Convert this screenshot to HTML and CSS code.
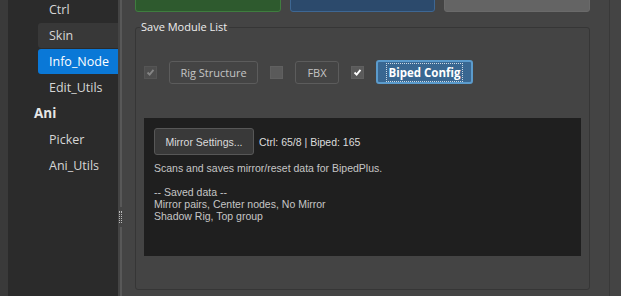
FILE: index.html
```html
<!DOCTYPE html>
<html lang="en">
<head>
  <meta charset="UTF-8" />
  <title>Rig Tools - Info_Node</title>
  <link rel="stylesheet" href="styles.css">
</head>
<body>
  <div class="app">
    <div class="edge"></div>

    <!-- Sidebar -->
    <nav class="sidebar">
      <div class="item">Ctrl</div>
      <div class="item hover">Skin</div>
      <div class="item active">Info_Node</div>
      <div class="item">Edit_Utils</div>
      <div class="section">Ani</div>
      <div class="item">Picker</div>
      <div class="item">Ani_Utils</div>
    </nav>

    <!-- Splitter -->
    <div class="splitter">
      <div class="split-line top"></div>
      <div class="grip"></div>
      <div class="split-line bottom"></div>
    </div>

    <!-- Page -->
    <main class="content">
      <div class="top-buttons">
        <button class="big green"></button>
        <button class="big blue"></button>
        <button class="big grey"></button>
      </div>

      <fieldset class="group">
        <legend>Save Module List</legend>

        <div class="module-row">
          <span class="check disabled"><svg viewBox="0 0 13 13"><polyline points="3,6.5 5.5,9 10,3.5"/></svg></span>
          <button class="module-btn rig">Rig Structure</button>
          <span class="check"></span>
          <button class="module-btn fbx">FBX</button>
          <span class="check on"><svg viewBox="0 0 13 13"><polyline points="3,6.5 5.5,9 10,3.5"/></svg></span>
          <button class="module-btn selected"><span class="focus">Biped Config</span></button>
        </div>

        <div class="console">
          <div class="console-top">
            <button class="mirror-btn">Mirror Settings...</button>
            <span class="stats">Ctrl: 65/8 | Biped: 165</span>
          </div>
          <p class="log">Scans and saves mirror/reset data for BipedPlus.<br><br>-- Saved data --<br>Mirror pairs, Center nodes, No Mirror<br>Shadow Rig, Top group</p>
        </div>
      </fieldset>
    </main>

    <div class="gutter"></div>
  </div>
</body>
</html>
```

FILE: styles.css
```css
*{margin:0;padding:0;box-sizing:border-box;}
html,body{width:100%;height:100%;background:#444;overflow:hidden;
  font-family:"Open Sans","Liberation Sans",sans-serif;color:#ddd;}

.app{display:flex;height:296px;}

.edge{width:8px;background:#3a3a3a;flex:none;}

/* Sidebar */
.sidebar{width:110px;flex:none;background:#2b2b2b;}
.sidebar .item{height:25px;line-height:25px;margin:0 0 1px 30px;padding-left:11px;
  font-size:12.5px;color:#d6d6d6;border-radius:3px 0 0 3px;}
.sidebar .item:first-child{margin-top:-3px;}
.sidebar .item.hover{background:#383838;}
.sidebar .item.active{background:#0a78d7;color:#fff;}
.sidebar .section{height:25px;line-height:25px;margin-bottom:1px;padding-left:26px;
  font-size:13.5px;font-weight:bold;color:#e6e6e6;}

/* Splitter */
.splitter{width:17px;flex:none;display:flex;flex-direction:column;padding-left:2px;}
.split-line{width:2px;background:#585858;}
.split-line.top{height:207px;margin-bottom:4px;}
.split-line.bottom{flex:1;margin-top:4px;}
.grip{width:3px;height:12px;border-left:1px dotted #bbb;border-right:1px dotted #bbb;margin-left:-1px;}

/* Main column */
.content{width:455px;flex:none;display:flex;flex-direction:column;}

.top-buttons{display:flex;gap:9px;height:30px;margin-top:-18px;flex:none;}
.big{flex:1;border-radius:3px;border:1px solid;}
.big.green{background:#2e5a2e;border-color:#3f7d3f;}
.big.blue{background:#2c4a6c;border-color:#3e6793;}
.big.grey{background:#646464;border-color:#6a6a6a;}

.group{flex:1;margin:8px 0 6px;border:1px solid #363636;border-radius:3px;
  padding:0 8px;display:flex;flex-direction:column;}
.group legend{margin-left:-4px;padding:0 2px 0 1px;font-size:11px;line-height:14px;color:#eee;}

.module-row{display:flex;align-items:center;gap:12px;height:24px;margin-top:26px;}
.check{width:13px;height:13px;background:#5a5a5a;border:1px solid #606060;flex:none;display:flex;}
.check svg{width:11px;height:11px;fill:none;stroke:#fff;stroke-width:2.2;}
.check.disabled{background:#4e4e4e;border-color:#555;}
.check.disabled svg{stroke:#858585;}
.module-btn{height:23px;background:#444;border:1px solid #5c5c5c;border-radius:3px;flex:none;
  font-family:inherit;font-size:11px;color:#c4c4c4;}
.module-btn.rig{width:89px;}
.module-btn.fbx{width:44px;}
.module-btn.selected{width:97px;height:24px;background:#396791;border:2px solid #5b9bcc;
  color:#fff;font-weight:bold;font-size:11.5px;}
.focus{outline:1px dotted rgba(255,255,255,.75);outline-offset:1px;}

.console{height:138px;margin-top:34px;background:#1f1f1f;padding:10px;
  font-family:"Liberation Sans",Arial,sans-serif;font-size:10.5px;color:#c6c6c6;}
.console-top{display:flex;align-items:center;gap:5px;}
.mirror-btn{width:100px;height:27px;background:#393939;border:1px solid #575757;border-radius:3px;
  font-family:inherit;font-size:10.5px;color:#dcdcdc;}
.stats{color:#dcdcdc;}
.log{margin-top:7px;line-height:12px;}

.gutter{flex:1;border-left:1px solid #393939;margin-left:19px;}
```
